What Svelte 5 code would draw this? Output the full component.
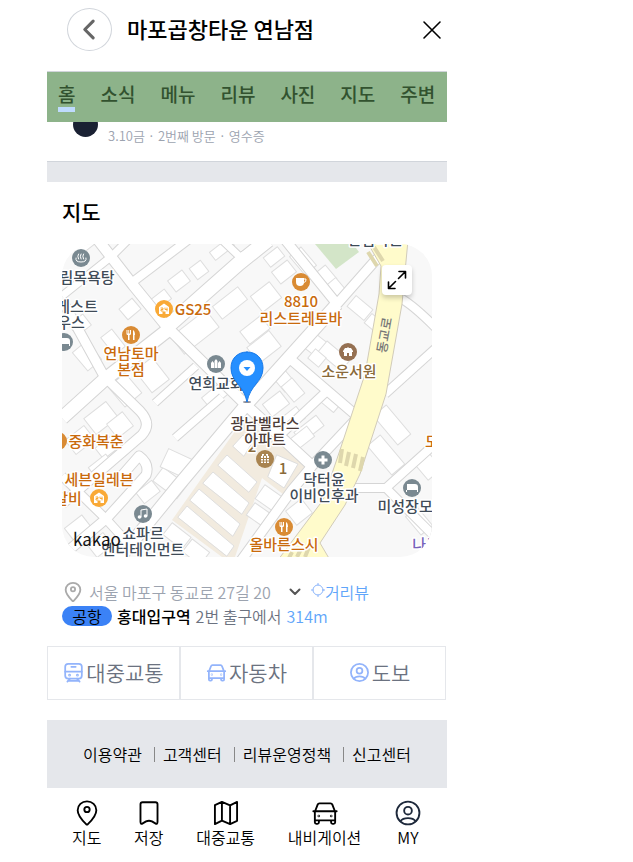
<script>
  const tabs = ['홈', '소식', '메뉴', '리뷰', '사진', '지도', '주변'];
  const policies = ['이용약관', '고객센터', '리뷰운영정책', '신고센터'];
  const routes = [
    { label: '대중교통', icon: 'train' },
    { label: '자동차', icon: 'car' },
    { label: '도보', icon: 'person' }
  ];
  const menu = [
    { label: '지도', icon: 'pin' },
    { label: '저장', icon: 'bookmark' },
    { label: '대중교통', icon: 'map' },
    { label: '내비게이션', icon: 'car' },
    { label: 'MY', icon: 'person' }
  ];

  const roads = [
    ['M98 240L133 285L168 328L246 405L312 466', 10],
    ['M62 300L104 376L140 411Q152 424 142 435L62 504', 9],
    ['M168 330L104 380L62 418', 13],
    ['M130 284L188 240', 8],
    ['M62 296L112 256L128 240', 7],
    ['M168 326L238 264L268 240', 14],
    ['M218 236L240 257L252 251', 7],
    ['M282 236L337 304L374 262L392 244', 9],
    ['M337 304L283 364L246 405L178 486L116 562', 12],
    ['M288 357L358 417', 9],
    ['M328 390L279 436', 8],
    ['M358 417L312 466L292 490L240 562', 9],
    ['M155 403L196 366', 7],
    ['M175 438L222 397', 7],
    ['M118 480L139 456Q150 464 146 475L107 518L62 556', 9],
    ['M62 476L106 519L136 552', 8],
    ['M400 298Q412 304 436 328', 8],
    ['M385 394L436 348', 8],
    ['M350 488H386L436 443', 8],
    ['M386 488L436 538', 8]
  ];

  // centre x, centre y, width, height, rotation
  const buildings = [
    [84, 246, 20, 10, -38], [179, 281, 18, 14, -37], [199, 270, 14, 14, -37],
    [222, 249, 24, 10, -38], [160, 300, 20, 12, -38], [130, 309, 17, 14, -40],
    [80, 325, 18, 14, -38], [113, 342, 22, 14, 52], [152, 375, 22, 28, -38],
    [87, 356, 24, 18, 50], [125, 390, 26, 22, 50], [101, 418, 28, 20, -38],
    [195, 332, 44, 22, -38], [230, 303, 32, 16, -38], [255, 330, 26, 16, -38],
    [266, 297, 24, 20, -38], [216, 395, 14, 26, 50], [120, 425, 20, 18, -38],
    [80, 440, 24, 18, -38], [108, 447, 22, 14, -38], [101, 466, 22, 13, -38],
    [170, 483, 30, 17, 37], [178, 464, 30, 20, 25], [78, 528, 22, 16, -38],
    [148, 492, 20, 14, -38], [100, 545, 20, 16, -38], [177, 536, 24, 15, 38],
    [196, 552, 22, 16, 38], [303, 261, 24, 15, 50], [274, 257, 18, 12, -38],
    [284, 272, 20, 15, -38], [325, 277, 18, 16, 50], [336, 289, 18, 14, 50],
    [360, 308, 22, 14, 40], [375, 324, 18, 12, 40], [264, 347, 28, 20, -38],
    [318, 347, 22, 18, 38], [334, 356, 30, 14, 40], [317, 358, 14, 12, 40],
    [284, 380, 20, 14, 50], [293, 390, 20, 14, 50], [276, 404, 22, 16, -38],
    [292, 419, 22, 15, -38], [309, 429, 28, 13, -38], [331, 400, 20, 16, 40],
    [302, 438, 22, 13, -38], [392, 425, 38, 17, 50], [386, 455, 38, 17, 50],
    [428, 466, 22, 18, 50], [269, 498, 22, 17, 35], [258, 514, 18, 15, 35],
    [299, 512, 20, 18, -38], [419, 521, 24, 15, 50]
  ];

  const apartments = [
    'M178 517L187 506L234 546L227 556Z', 'M190 500L199 489L240 524L233 536Z',
    'M203 483L213 472L249 503L242 514Z', 'M218 465L227 455L257 482L249 492Z',
    'M233 446L243 435L252 443L244 456Z', 'M277 455L298 464L284 488L268 477Z'
  ];

  const badges = [
    [81, 258, 'slate', 'spa'], [164, 309, 'amber', 'shop'], [131, 335, 'orange', 'fork'],
    [301, 282, 'orange', 'cup'], [348, 352, 'brown', 'house'], [216, 364, 'slate', 'church'],
    [265, 459, 'tan', 'flats'], [323, 460, 'slate', 'plus'], [412, 488, 'slate', 'bed'],
    [284, 527, 'orange', 'fork'], [99, 498, 'amber', 'shop'], [143, 514, 'slate', 'note'],
    [64, 342, 'slate', 'bed'], [58, 441, 'orange', 'blank']
  ];

  const labels = [
    [87, 283, '림목욕탕', 'ink'], [77, 312, '게스트', 'ink'], [71, 328, '우스', 'ink'],
    [193, 315, 'GS25', 'rust'], [131, 359, '연남토마', 'rust'], [131, 375, '본점', 'rust'],
    [301, 307, '8810', 'rust'], [301, 324, '리스트레토바', 'rust'],
    [349, 377, '소운서원', 'earth'], [216, 389, '연희교회', 'ink'],
    [265, 429, '광남벨라스', 'dark'], [265, 445, '아파트', 'dark'],
    [324, 485, '닥터윤', 'ink'], [324, 501, '이비인후과', 'ink'],
    [412, 512, '미성장모텔', 'ink'], [284, 550, '올바른스시', 'rust'],
    [96, 447, '중화복춘', 'rust'], [99, 485, '세븐일레븐', 'rust'],
    [68, 504, '갈비', 'rust'], [143, 539, '쇼파르', 'ink'], [143, 555, '엔터테인먼트', 'ink'],
    [375, 245, '산림녹원', 'ink'], [432, 447, '도', 'rust'], [426, 550, '나무', 'violet']
  ];
</script>

{#snippet icon(name)}
  <svg class="icon" viewBox="0 0 24 24" aria-hidden="true">
    {#if name === 'pin'}
      <path d="M12 2C7.5 2 4 5.400 4 9.600C4 14.500 9 19.300 11.300 21.600Q12 22.200 12.700 21.600C15 19.300 20 14.500 20 9.600C20 5.400 16.500 2 12 2Z" />
      <circle cx="12" cy="9" r="2.300" />
    {:else if name === 'bookmark'}
      <path d="M6.500 2.800H17.500Q19.300 2.800 19.300 4.600V19.600Q19.300 22 17.400 20.900L14.500 19.200Q12 18 9.500 19.200L6.600 20.900Q4.700 22 4.700 19.600V4.600Q4.700 2.800 6.500 2.800Z" />
    {:else if name === 'map'}
      <path d="M2.500 5.300L8.500 2.500L15.500 5.500L21.500 2.500V18.700L15.500 21.500L8.500 18.500L2.500 21.500ZM8.500 2.500V18.500M15.500 5.500V21.500" />
    {:else if name === 'car'}
      <path d="M3.500 10.500L5.700 4.800Q6.100 3.700 7.300 3.700H16.700Q17.900 3.700 18.300 4.800L20.500 10.500M2 10.500H22M3.300 10.500V20Q3.300 21.300 4.600 21.300H5.500Q6.800 21.300 6.800 20V18.300H17.200V20Q17.200 21.300 18.500 21.300H19.400Q20.700 21.300 20.700 20V10.500M3.300 18.300H20.700" />
      <circle cx="6.700" cy="14.500" r="0.300" /><circle cx="17.300" cy="14.500" r="0.300" />
    {:else if name === 'train'}
      <rect x="2.500" y="2" width="19" height="17" rx="3.500" />
      <path d="M2.500 11H21.500M9.500 5.500H14.500M8 19L5 22.500M16 19L19 22.500M6.500 21.500H17.500" />
      <circle cx="7.500" cy="15" r="0.600" /><circle cx="16.500" cy="15" r="0.600" />
    {:else if name === 'person'}
      <circle cx="12" cy="12" r="9.800" /><circle cx="12" cy="10" r="3.300" />
      <path d="M5.500 19C8 15.500 16 15.500 18.500 19" />
    {/if}
  </svg>
{/snippet}

{#snippet glyph(name)}
  {#if name === 'spa'}
    <path class="line" d="M-5 0Q-6 4 0 4Q6 4 5 0M-2.500-4Q-4-2-2.500 1M0-4Q-1.500-2 0 1M2.500-4Q1-2 2.500 1" />
  {:else if name === 'shop'}
    <path d="M-5 5V-2L0-5.500L5-2V5H1.500V2.500H-1.500V5Z" />
    <path class="mark" d="M-3-1H-1V0.500H-3V2H-1M1-1V0.500H3M3-1V2" />
  {:else if name === 'house'}
    <path d="M-5-1L-3-4H-1L0-5L1-4H3L5-1V0H4V4H1V1H-1V4H-4V0H-5Z" />
  {:else if name === 'fork'}
    <path d="M-4.500-5V-1Q-4.500 0-3 0V5H-1.500V0Q0 0 0-1V-5H-1V-1.500H-1.800V-5H-2.700V-1.500H-3.500V-5ZM2-5Q4-4 4 0H3.500V5H2Z" />
  {:else if name === 'cup'}
    <path d="M-5-4H3V0Q3 4-1 4Q-5 4-5 0Z" /><path class="line" d="M3-3H5Q6 0 2 1" />
  {:else if name === 'church'}
    <path d="M-5 4V-1L-3.500-3L-2-1V4ZM-1.500 4V-3L0-5L1.500-3V4ZM2 4V-1L3.500-3L5-1V4Z" />
  {:else if name === 'flats'}
    <path d="M-4-3H4V4H-4ZM-3-5H-1V-3H-3ZM1-5H3V-3H1Z" />
    <path class="grid" d="M-4-0.500H4M-4 2H4M-1.500-3V4M1.500-3V4" />
  {:else if name === 'plus'}
    <path d="M-1.500-4.500H1.500V-1.500H4.500V1.500H1.500V4.500H-1.500V1.500H-4.500V-1.500H-1.500Z" />
  {:else if name === 'bed'}
    <path d="M-6-4H-5V1H5V-1Q5-3 3-3H-1V0H-4V-2H-5V4H-6V2H5V4H6V-1Q6-4 3-4Z" />
  {:else if name === 'note'}
    <path class="line" d="M-2 3V-4L4-5V2" /><circle cx="-3.500" cy="3" r="1.800" /><circle cx="2.500" cy="2" r="1.800" />
  {/if}
{/snippet}

<main class="app">
  <header class="top">
    <button class="back" aria-label="뒤로">
      <svg viewBox="0 0 24 24"><path d="M15.500 4L7.500 12L15.500 20" /></svg>
    </button>
    <h1>마포곱창타운 연남점</h1>
    <button class="close" aria-label="닫기">
      <svg viewBox="0 0 20 20"><path d="M2 2L18 18M18 2L2 18" /></svg>
    </button>
  </header>

  <nav class="tabs">
    {#each tabs as tab, i}
      <a href="#tab{i}" class:active={i === 0}>{tab}</a>
    {/each}
  </nav>

  <section class="visit">
    <span class="avatar"></span>
    <p>3.10금 · 2번째 방문 · 영수증</p>
  </section>
  <div class="divider"></div>

  <section class="place">
    <h2>지도</h2>
    <div class="map">
      <svg viewBox="62 244 370 313" role="img" aria-label="마포곱창타운 주변 지도">
        <rect x="62" y="244" width="370" height="313" fill="#f8f8f8" />
        <path d="M315 244H353L359 252L336 269Z" fill="#d3e5c8" />
        <path d="M243 420L312 466L288 498L262 478L235 557H222L172 520Z" fill="#f2ebdf" />
        {#each buildings as [x, y, w, h, a]}
          <rect class="building" x={-w / 2} y={-h / 2} width={w} height={h} transform="translate({x} {y}) rotate({a})" />
        {/each}
        {#each apartments as d}<path class="building" {d} />{/each}
        {#each roads as [d, w]}<path class="casing" {d} stroke-width={w + 2} />{/each}
        {#each roads as [d, w]}<path class="road" {d} stroke-width={w} />{/each}
        <path class="avenue" d="M366 240L381 266L379 294L365 374L340 450L323 500L278 560H330L320 543L345 505L360 474L386 394L402 304L408 240Z" />
        <path class="crossing" d="M368 252L377 266M374 247L383 261M342 449L340 463M349 452L346 466M356 454L353 468M363 457L360 471M292 552L288 560M301 549L297 557M309 547L305 557" />
        <text class="label street" transform="translate(389 336) rotate(-80)">동교로</text>
        <text class="label earth" x="252" y="452">2</text>
        <text class="label earth" x="283" y="474">1</text>
        {#each badges as [x, y, tone, kind]}
          <g class="badge {tone}" transform="translate({x} {y})"><circle class="disc" r="9" />{@render glyph(kind)}</g>
        {/each}
        {#each labels as [x, y, text, tone]}
          <text class="label {tone}" {x} {y}>{text}</text>
        {/each}
        <ellipse cx="247" cy="402" rx="4" ry="1" fill="#8b8d98" />
        <path d="M247 352C237 352 231 359 231 368C231 382 244 385 247 402C250 385 263 382 263 368C263 359 257 352 247 352Z" fill="#258fff" stroke="#1779e8" />
        <circle cx="247" cy="368" r="8" fill="#fff" />
        <path d="M243.500 367H250.500L247 371Z" fill="#258fff" />
        <text class="brand" x="73" y="546">kakao</text>
      </svg>
      <button class="expand" aria-label="지도 크게 보기">
        <svg viewBox="0 0 20 20"><path d="M11.500 8.500L18.500 1.500M12 1.500H18.500V8M8.500 11.500L1.500 18.500M1.500 12V18.500H8" /></svg>
      </button>
    </div>

    <div class="address">
      <span class="marker">{@render icon('pin')}</span>
      <span>서울 마포구 동교로 27길 20</span>
      <button class="more" aria-label="주소 더보기">
        <svg viewBox="0 0 12 12"><path d="M1.500 3.500L6 8L10.500 3.500" /></svg>
      </button>
      <a href="#street">
        <svg viewBox="0 0 14 14"><circle cx="7" cy="7" r="5" /><path d="M7 0V2M7 12V14M0 7H2M12 7H14" /></svg>거리뷰
      </a>
    </div>
    <p class="station">
      <span class="line-tag">공항</span><strong>홍대입구역</strong><span>2번 출구에서</span><em>314m</em>
    </p>
  </section>

  <div class="routes">
    {#each routes as route}
      <button>{@render icon(route.icon)}{route.label}</button>
    {/each}
  </div>

  <footer class="policies">
    {#each policies as policy, i}
      <a href="#policy{i}">{policy}</a>
    {/each}
  </footer>

  <nav class="menu">
    {#each menu as item, i}
      <a href="#menu{i}">{@render icon(item.icon)}<span>{item.label}</span></a>
    {/each}
  </nav>
</main>

<style>
  :global(body) { background: #fff; }
  .app {
    max-width: 400px;
    margin-left: 47px;
    font-family: "Noto Sans CJK KR", "Noto Sans", sans-serif;
    font-weight: 350;
    font-size: 16px;
    line-height: 24px;
    color: #000;
  }
  .app :is(h1, h2, p) { margin: 0; }
  a { color: inherit; text-decoration: none; }
  button { padding: 0; border: 0; background: none; font: inherit; color: inherit; }
  svg { display: block; fill: none; stroke: currentColor; stroke-linecap: round; stroke-linejoin: round; }

  .top { display: flex; align-items: center; height: 59px; padding: 0 5px 12px 20px; }
  .back {
    display: grid; place-items: center; width: 45px; height: 43px;
    border: 1px solid #d1d5db; border-radius: 50%; color: #666;
  }
  .back svg { width: 25px; height: 25px; stroke-width: 3; }
  h1 { flex: 1; padding: 0 0 4px 15px; font-size: 22px; line-height: 28px; font-weight: 500; }
  .close svg { width: 20px; height: 20px; stroke-width: 1.600; }

  .tabs {
    position: relative; display: flex; gap: 25px; height: 50px; padding: 0 11px;
    align-items: center; border-top: 1px solid #d1d5db; background: #8db38a;
    color: #32522f; font-size: 19px; font-weight: 500; white-space: nowrap;
  }
  .tabs a { box-sizing: border-box; height: 30px; border-bottom: 5px solid transparent; }
  .tabs .active { border-color: #bfdbfe; }

  .visit { display: flex; align-items: flex-start; height: 39px; padding-left: 26px; gap: 10px; }
  .avatar { width: 25px; height: 25px; margin-top: -10px; border-radius: 50%; background: #1a2133; }
  .visit p { padding-top: 2px; font-size: 13px; color: #9ca3af; }
  .divider { height: 20px; border-top: 1px solid #d1d5db; background: #e5e7eb; }

  .place { padding: 14px 15px 0; }
  h2 { font-size: 21px; line-height: 30px; font-weight: 500; }
  .map { position: relative; margin-top: 18px; border-radius: 32px; overflow: hidden; }
  .map > svg { width: 100%; stroke: none; }
  .building { fill: #fff; stroke: #dedede; }
  .casing { stroke: #d5d5d5; stroke-linecap: butt; }
  .road { stroke: #fff; stroke-linecap: butt; }
  .avenue { fill: #fffbcb; stroke: #d1cbb9; stroke-width: 1; }
  .crossing { stroke: #ded7ad; stroke-width: 4; stroke-linecap: butt; }
  .label {
    font-size: 15px; font-weight: 500; text-anchor: middle;
    stroke: #fff; stroke-width: 3; paint-order: stroke;
  }
  .ink { fill: #3f4b57; }
  .rust { fill: #c96a0c; }
  .earth { fill: #8a6a3a; }
  .dark { fill: #4d3d38; }
  .violet { fill: #7662bb; }
  .street { fill: #777; font-size: 13px; stroke: none; }
  .badge { fill: #fff; }
  .slate .disc { fill: #7a8991; }
  .amber .disc { fill: #f9a936; }
  .orange .disc { fill: #d98b34; }
  .brown .disc { fill: #957052; }
  .tan .disc { fill: #a98450; }
  .line { fill: none; stroke: #fff; stroke-width: 1; }
  .mark { fill: none; stroke: #f9a936; stroke-width: 1; }
  .grid { stroke: #a98450; stroke-width: 1; }
  .brand { fill: #111; font-size: 17px; font-weight: 400; }
  .expand {
    position: absolute; top: 21px; right: 20px; display: grid; place-items: center;
    width: 30px; height: 30px; border-radius: 4px; background: #fff; box-shadow: 0 3px 5px #0003;
  }
  .expand svg { width: 20px; height: 20px; stroke-width: 1.600; }

  .address { display: flex; align-items: center; margin-top: 23px; color: #9ca3af; white-space: nowrap; }
  .marker { width: 22px; margin-right: 5px; color: #aaa; }
  .marker .icon { width: 22px; height: 22px; stroke-width: 2; }
  .more { margin: 0 10px 0 18px; color: #555; }
  .more svg { width: 12px; height: 12px; stroke-width: 2; }
  .address a { display: flex; color: #60a5fa; }
  .address a svg { width: 14px; height: 14px; margin-top: 3px; color: #8ab4fb; }
  .station { display: flex; align-items: center; gap: 5px; color: #6b7280; white-space: nowrap; }
  .line-tag { width: 50px; border-radius: 10px; background: #3b82f6; color: #000; line-height: 20px; text-align: center; }
  .station strong { color: #000; font-weight: 500; }
  .station em { color: #60a5fa; font-style: normal; }

  .icon { flex: none; stroke-width: 1.600; }
  .routes { display: grid; grid-template-columns: repeat(3, 1fr); margin: 18px 1px 20px 0; }
  .routes button {
    display: flex; align-items: center; justify-content: center; height: 54px; padding-bottom: 2px;
    border: 1px solid #e5e7eb; font-size: 21px; color: #6b7280;
  }
  .routes .icon { width: 21px; height: 21px; margin-right: 2px; color: #93b4fb; stroke-width: 2; }

  .policies { display: flex; justify-content: center; padding: 22px 0; background: #e5e7eb; white-space: nowrap; }
  .policies a { display: flex; align-items: center; }
  .policies a + a::before { content: ""; width: 1px; height: 15px; margin: 0 8px 0 12px; background: #888; }

  .menu { display: flex; justify-content: space-between; padding: 11px 25px 0; white-space: nowrap; }
  .menu a { display: flex; flex-direction: column; align-items: center; line-height: 20px; }
  .menu .icon { width: 28px; height: 28px; }
  .menu a:last-child .icon { color: #1e293b; }
</style>
